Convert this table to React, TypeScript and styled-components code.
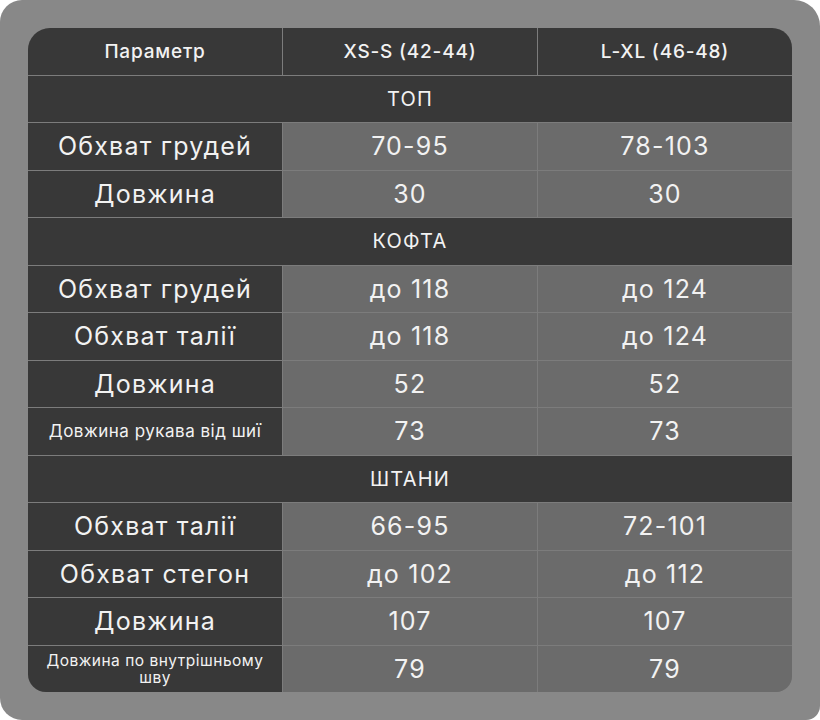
import styled, { createGlobalStyle } from "styled-components";

const GlobalStyle = createGlobalStyle`
  html, body {
    margin: 0;
    padding: 0;
    background: #ffffff;
  }
  * {
    box-sizing: border-box;
  }
`;

const Frame = styled.div`
  width: 820px;
  height: 720px;
  background-color: #888888;
  border-radius: 22px 26px 14px 22px;
  padding: 28px;
  font-family: Inter, "Noto Sans", sans-serif;
  color: #f2f2f2;
`;

const Table = styled.div`
  width: 764px;
  height: 664px;
  display: grid;
  grid-template-columns: 254px 1fr 1fr;
  grid-template-rows: repeat(14, 1fr);
  gap: 1px;
  background-color: #7c7c7c;
  border-radius: 22px 20px 16px 18px;
  overflow: hidden;
`;

interface ICellProps {
  $dark?: boolean;
}

const Cell = styled.div<ICellProps>`
  display: flex;
  align-items: center;
  justify-content: center;
  text-align: center;
  background-color: ${(props) => (props.$dark ? "#383838" : "#6b6b6b")};
  font-size: 25px;
  letter-spacing: 1.2px;
`;

const HeadCell = styled(Cell)`
  font-size: 19px;
  font-weight: 500;
  letter-spacing: 0.8px;
  background-color: #383838;
`;

const Section = styled(Cell)`
  grid-column: 1 / span 3;
  background-color: #383838;
  font-size: 20px;
  letter-spacing: 1.2px;
`;

interface ISmallProps {
  $size: number;
}

const SmallLabel = styled(Cell)<ISmallProps>`
  font-size: ${(props) => props.$size}px;
  line-height: 17px;
  letter-spacing: 0.5px;
  padding: 0 8px;
`;

interface IRow {
  label: string;
  xs: string;
  lx: string;
  small?: number;
}

interface IGroup {
  title: string;
  rows: IRow[];
}

const groups: IGroup[] = [
  {
    title: "ТОП",
    rows: [
      { label: "Обхват грудей", xs: "70-95", lx: "78-103" },
      { label: "Довжина", xs: "30", lx: "30" },
    ],
  },
  {
    title: "КОФТА",
    rows: [
      { label: "Обхват грудей", xs: "до 118", lx: "до 124" },
      { label: "Обхват талії", xs: "до 118", lx: "до 124" },
      { label: "Довжина", xs: "52", lx: "52" },
      { label: "Довжина рукава від шиї", xs: "73", lx: "73", small: 17 },
    ],
  },
  {
    title: "ШТАНИ",
    rows: [
      { label: "Обхват талії", xs: "66-95", lx: "72-101" },
      { label: "Обхват стегон", xs: "до 102", lx: "до 112" },
      { label: "Довжина", xs: "107", lx: "107" },
      {
        label: "Довжина по внутрішньому шву",
        xs: "79",
        lx: "79",
        small: 15.5,
      },
    ],
  },
];

function App() {
  return (
    <>
      <GlobalStyle />
      <Frame>
        <Table>
          <HeadCell>Параметр</HeadCell>
          <HeadCell>XS-S (42-44)</HeadCell>
          <HeadCell>L-XL (46-48)</HeadCell>
          {groups.map((group) => (
            <>
              <Section key={group.title}>{group.title}</Section>
              {group.rows.map((row, i) => (
                <>
                  {row.small ? (
                    <SmallLabel
                      key={`${group.title}-l-${i}`}
                      $dark
                      $size={row.small}
                    >
                      {row.label}
                    </SmallLabel>
                  ) : (
                    <Cell key={`${group.title}-l-${i}`} $dark>
                      {row.label}
                    </Cell>
                  )}
                  <Cell key={`${group.title}-a-${i}`}>{row.xs}</Cell>
                  <Cell key={`${group.title}-b-${i}`}>{row.lx}</Cell>
                </>
              ))}
            </>
          ))}
        </Table>
      </Frame>
    </>
  );
}

export default App;
